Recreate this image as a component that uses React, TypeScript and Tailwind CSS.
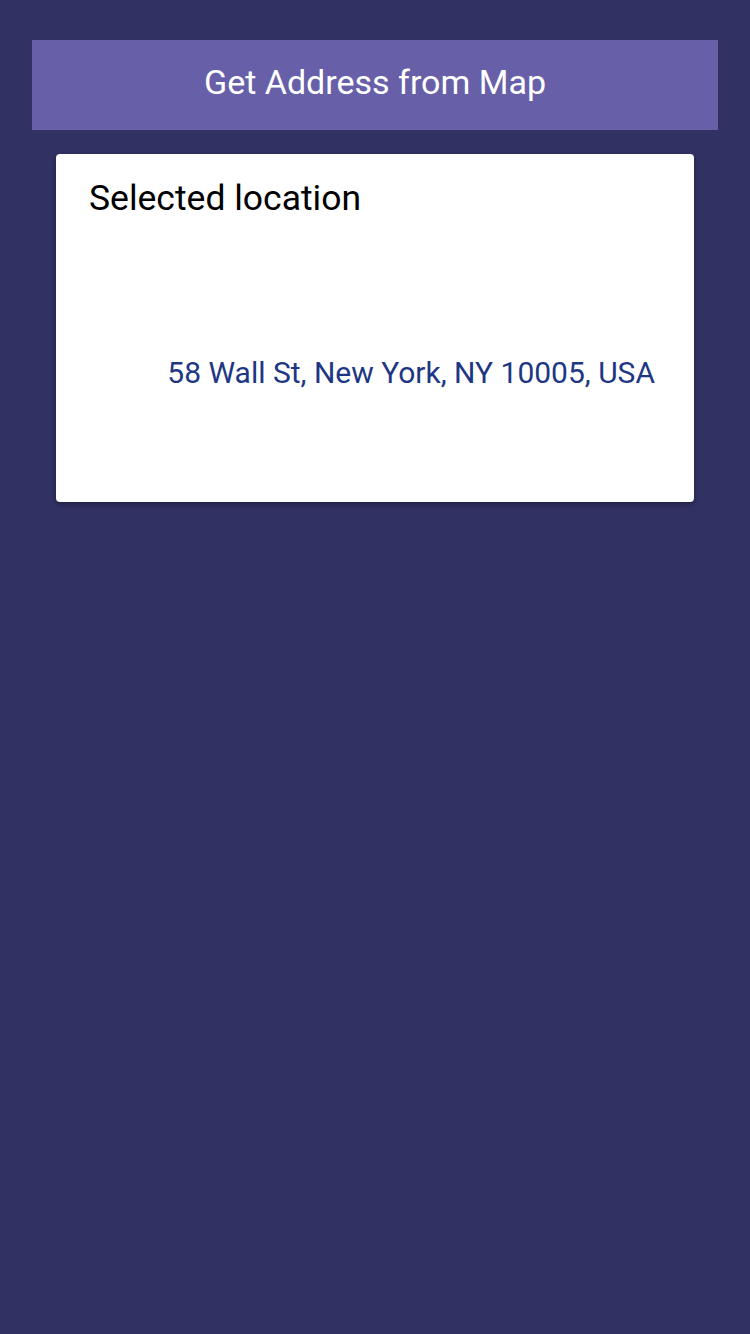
export default function App() {
  return (
    <div
      className="min-h-[1334px] bg-[#313163] px-8 pt-10"
      style={{ fontFamily: 'Roboto, "Liberation Sans", sans-serif' }}
    >
      <button
        type="button"
        className="flex h-[90px] w-full items-center justify-center bg-[#6760a9] pb-[5px] text-[34px] text-white"
      >
        Get Address from Map
      </button>

      <div className="mx-6 mt-6 h-[348px] rounded bg-white px-[33px] pt-[22px] shadow-[0_2px_4px_rgba(0,0,0,0.35)]">
        <h2 className="text-[35.5px] leading-[44px] text-black">Selected location</h2>
        <div className="flex h-[260px] items-center justify-end pt-[44px] pr-[6px]">
          <p className="text-[30px] text-[#1e3784]">58 Wall St, New York, NY 10005, USA</p>
        </div>
      </div>
    </div>
  )
}
